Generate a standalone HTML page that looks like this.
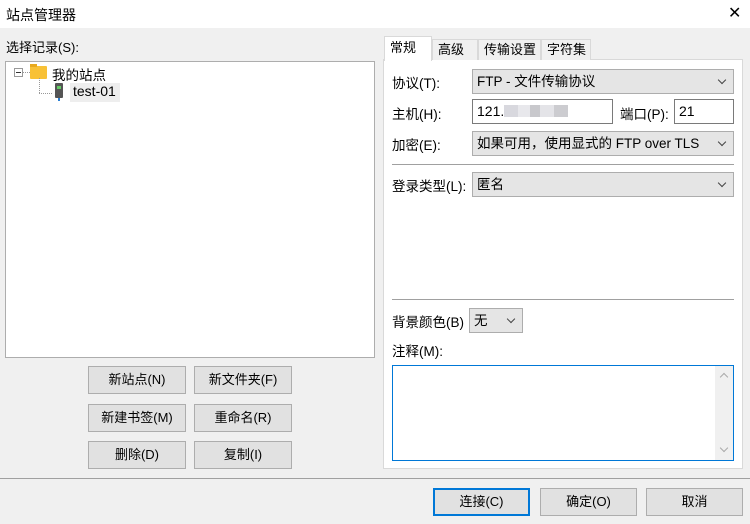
<!DOCTYPE html><html><head><meta charset="utf-8"><style>
*{box-sizing:border-box;margin:0;padding:0}
body{width:750px;height:524px;background:#f0f0f0;font-family:"Liberation Sans","Noto Sans CJK SC",sans-serif;font-size:13px;color:#000;position:relative;overflow:hidden}
.a{position:absolute}
.title{left:0;top:0;width:750px;height:28px;background:#fff}
.btn{position:absolute;background:#e1e1e1;border:1px solid #adadad;text-align:center;line-height:26px;height:28px}
.combo{position:absolute;background:#e5e5e5;border:1px solid #adadad;height:25px;line-height:23px;padding-left:4px;font-size:13.5px}
.combo:after{content:"";position:absolute;right:8px;top:7px;width:5px;height:5px;border-right:1px solid #444;border-bottom:1px solid #444;transform:rotate(45deg)}
.inp{position:absolute;background:#fff;border:1px solid #7a7a7a;height:25px;line-height:23px;padding-left:4px;font-size:14px}
.tab{position:absolute;top:39px;height:21px;border:1px solid #d9d9d9;border-bottom:none;background:#f0f0f0;line-height:20px;padding-left:5px}
.g{display:inline-block;height:12px;vertical-align:-1px}
.l{position:absolute;font-size:13.5px}
</style></head><body>
<div class="a title"></div>
<div class="a" style="left:6px;top:5px;font-size:14px">站点管理器</div>
<div class="a" style="left:728px;top:3px;font-size:16px;font-weight:300">✕</div>
<div class="a" style="left:6px;top:37px">选择记录(S):</div>
<div class="a" style="left:5px;top:61px;width:370px;height:297px;background:#fff;border:1px solid #adadad"></div>
<div class="a" style="left:14px;top:68px;width:9px;height:9px;border:1px solid #999;background:#fff"></div>
<div class="a" style="left:16px;top:72px;width:5px;height:1px;background:#333"></div>
<div class="a" style="left:23px;top:72px;width:7px;border-top:1px dotted #999"></div>
<div class="a" style="left:30px;top:66px;width:17px;height:13px;background:#f8c136;border-radius:1px"></div>
<div class="a" style="left:30px;top:64px;width:7px;height:3px;background:#e8a91e"></div>
<div class="a" style="left:52px;top:64px;font-size:13.5px">我的站点</div>
<div class="a" style="left:39px;top:78px;height:15px;border-left:1px dotted #999"></div>
<div class="a" style="left:39px;top:93px;width:13px;border-top:1px dotted #999"></div>
<div class="a" style="left:55px;top:83px;width:8px;height:15px;background:#555;border-radius:1px"></div>
<div class="a" style="left:57px;top:86px;width:4px;height:3px;background:#6c6"></div>
<div class="a" style="left:58px;top:98px;width:2px;height:3px;background:#2a7fd4"></div>
<div class="a" style="left:70px;top:83px;width:50px;height:19px;background:#eee"></div>
<div class="a" style="left:73px;top:83px;font-size:14px">test-01</div>
<div class="btn" style="left:88px;top:366px;width:98px">新站点(N)</div>
<div class="btn" style="left:194px;top:366px;width:98px">新文件夹(F)</div>
<div class="btn" style="left:88px;top:404px;width:98px">新建书签(M)</div>
<div class="btn" style="left:194px;top:404px;width:98px">重命名(R)</div>
<div class="btn" style="left:88px;top:441px;width:98px">删除(D)</div>
<div class="btn" style="left:194px;top:441px;width:98px">复制(I)</div>
<div class="a" style="left:383px;top:59px;width:360px;height:410px;background:#fff;border:1px solid #d9d9d9"></div>
<div class="tab" style="left:384px;top:36px;width:48px;height:25px;background:#fff;z-index:2;line-height:22px">常规</div>
<div class="tab" style="left:432px;width:46px">高级</div>
<div class="tab" style="left:478px;width:63px">传输设置</div>
<div class="tab" style="left:541px;width:50px">字符集</div>
<div class="l" style="left:392px;top:72px">协议(T):</div>
<div class="combo" style="left:472px;top:69px;width:262px">FTP - 文件传输协议</div>
<div class="l" style="left:392px;top:103px">主机(H):</div>
<div class="inp" style="left:472px;top:99px;width:141px">121.<span class="g" style="width:14px;background:#d8d8de"></span><span class="g" style="width:12px;background:#e8e8ec"></span><span class="g" style="width:10px;background:#c8c8cc"></span><span class="g" style="width:14px;background:#e4e4e8"></span><span class="g" style="width:14px;background:#ccccd0"></span></div>
<div class="l" style="left:620px;top:103px">端口(P):</div>
<div class="inp" style="left:674px;top:99px;width:60px">21</div>
<div class="l" style="left:392px;top:134px">加密(E):</div>
<div class="combo" style="left:472px;top:131px;width:262px">如果可用，使用显式的 FTP over TLS</div>
<div class="a" style="left:392px;top:164px;width:342px;height:1px;background:#a0a0a0"></div>
<div class="l" style="left:392px;top:175px">登录类型(L):</div>
<div class="combo" style="left:472px;top:172px;width:262px">匿名</div>
<div class="a" style="left:392px;top:299px;width:342px;height:1px;background:#a0a0a0"></div>
<div class="l" style="left:392px;top:311px">背景颜色(B)</div>
<div class="combo" style="left:469px;top:308px;width:54px">无</div>
<div class="l" style="left:392px;top:340px">注释(M):</div>
<div class="a" style="left:392px;top:365px;width:342px;height:96px;background:#fff;border:1px solid #0078d7"></div>
<div class="a" style="left:715px;top:366px;width:18px;height:94px;background:#f0f0f0"></div>
<div class="a" style="left:721px;top:374px;width:6px;height:6px;border-left:1px solid #aaa;border-top:1px solid #aaa;transform:rotate(45deg)"></div>
<div class="a" style="left:721px;top:445px;width:6px;height:6px;border-right:1px solid #aaa;border-bottom:1px solid #aaa;transform:rotate(45deg)"></div>
<div class="a" style="left:0;top:478px;width:750px;height:1px;background:#a0a0a0"></div>
<div class="btn" style="left:433px;top:488px;width:97px;border:2px solid #0078d7;line-height:24px">连接(C)</div>
<div class="btn" style="left:540px;top:488px;width:97px">确定(O)</div>
<div class="btn" style="left:646px;top:488px;width:97px">取消</div>
</body></html>
